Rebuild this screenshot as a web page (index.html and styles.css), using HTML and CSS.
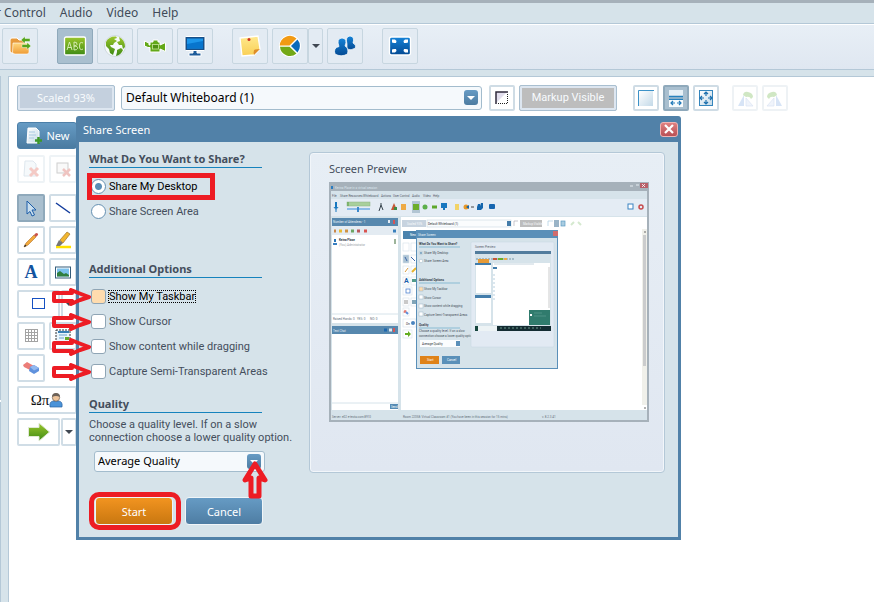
FILE: index.html
```
<!DOCTYPE html>
<html lang="en">
<head>
  <meta charset="UTF-8">
  <title>Share Screen</title>
  <link rel="stylesheet" href="styles.css">
</head>
<body>
  <svg class="defs" width="0" height="0" aria-hidden="true">
    <defs>
      <linearGradient id="green" x1="0" y1="0" x2="0" y2="1"><stop offset="0" stop-color="#9bc62c"/><stop offset="1" stop-color="#3e8a14"/></linearGradient>
      <linearGradient id="blue" x1="0" y1="0" x2="0" y2="1"><stop offset="0" stop-color="#1583d8"/><stop offset="1" stop-color="#044a93"/></linearGradient>
      <linearGradient id="folder" x1="0" y1="0" x2="0" y2="1"><stop offset="0" stop-color="#ffd77e"/><stop offset="1" stop-color="#ee9b35"/></linearGradient>
      <linearGradient id="note" x1="0" y1="0" x2="0" y2="1"><stop offset="0" stop-color="#ffe98e"/><stop offset="1" stop-color="#f9cf55"/></linearGradient>
      <linearGradient id="page" x1="0" y1="0" x2="1" y2="1"><stop offset="0" stop-color="#ffffff"/><stop offset="1" stop-color="#c3d9e8"/></linearGradient>
      <symbol id="arrow" viewBox="0 0 40 20">
        <path d="M3 6 H21 L20 3 L30 7 L38 10 L29 13 L20 17 L21 14 H3 Z" fill="none" stroke="#ed1c24" stroke-width="4" stroke-linejoin="round"/>
      </symbol>
    </defs>
  </svg>

  <nav class="menu">
    <a href="#">r Control</a>
    <a href="#">Audio</a>
    <a href="#">Video</a>
    <a href="#">Help</a>
  </nav>

  <div class="toolbar">
    <div class="group">
      <button class="tool" aria-label="Share files">
        <svg width="24" height="24" viewBox="0 0 24 24"><path d="M2 6 Q2 4 4 4 H9 L11 6 H17 V19 H4 Q2 19 2 17Z" fill="#e79a3c" stroke="#fff"/><path d="M5 9 H21 V18 Q21 20 19 20 H7 Q4.500 20 4.500 18Z" fill="url(#folder)" stroke="#fff" stroke-width=".6"/><path d="M13 6 L17 2.500 V4.500 H22 V7.500 H17 V9.500Z M23 12 L19 8.500 V10.500 H14 V13.500 H19 V15.500Z" fill="#55a51c" stroke="#fff" stroke-width=".4"/></svg>
      </button>
    </div>
    <div class="group">
      <button class="tool active" aria-label="Whiteboard">
        <svg width="24" height="24" viewBox="0 0 24 24"><rect x="1.500" y="3" width="21" height="18" rx="1.500" fill="url(#green)" stroke="#fff" stroke-width="1.300"/><g fill="none" stroke="#dff0bd" stroke-width=".9"><path d="M4 16 L6.500 8 L9 16 M5 13.500 H8.500"/><path d="M11 16 V8 Q14.500 8 14 10.500 Q13.500 12 11 12 Q15 12 14.500 14.500 Q14 16 11 16"/><path d="M20 9 Q16.500 7 16.500 12 Q16.500 17 20 15"/></g></svg>
      </button>
      <button class="tool" aria-label="Web tour">
        <svg width="24" height="24" viewBox="0 0 24 24"><circle cx="12" cy="12" r="10.500" fill="#f6fafa" stroke="#cfd9de"/><path d="M3 8 Q6 2 13 2.500 L14 4 L11 5 L14 7 L11 9 L10 11 L7 11 L8 13 L12 15 L11 18 L10 21 L7 19 L6 15 L3 12Z" fill="url(#green)"/><path d="M16 3 Q22 6 22 13 L20 15 L19 11 L16 11 L14 8 L17 7Z M14 16 L18 14 L20 16 Q18 21 13 22 L14 18Z" fill="url(#green)"/></svg>
      </button>
      <button class="tool" aria-label="Camera">
        <svg width="24" height="24" viewBox="0 0 24 24"><path d="M1.500 7 L6 9 V11 H7 V8 H10 V6 H15 V8 H17 V11 L22.500 8.500 V17.500 L17 15 V18 H7 V13.500 H5 L1.500 12Z" fill="#62a818" stroke="#fff" stroke-width="1" stroke-linejoin="round"/><rect x="9.500" y="10.500" width="6" height="4.500" fill="#4f9012" stroke="#c9e69a" stroke-width=".8"/></svg>
      </button>
      <button class="tool" aria-label="Share screen">
        <svg width="24" height="24" viewBox="0 0 24 24"><path d="M10 16 H14 V19 H18 V22 H6 V19 H10Z" fill="#1c5b9a" stroke="#fff"/><rect x="2" y="2.500" width="20" height="14" rx="1" fill="#174f88" stroke="#fff"/><rect x="4" y="4.500" width="16" height="10" fill="#1d96ea"/><path d="M4 10 L20 7 V14.500 H4Z" fill="#0875cd"/></svg>
      </button>
    </div>
    <div class="group">
      <button class="tool" aria-label="Notes">
        <svg width="24" height="24" viewBox="0 0 24 24"><path d="M2 4 L20 2 L22 15 L16 21 L4 22Z" fill="url(#note)" stroke="#fff" stroke-width="1.300"/><path d="M16 21 Q15 16 17 15.500 L22 15Z" fill="#dd8e2a"/><circle cx="11" cy="5.500" r="1.500" fill="#cf3324"/></svg>
      </button>
      <div class="split">
        <button class="tool" aria-label="Polls">
          <svg width="24" height="24" viewBox="0 0 24 24"><circle cx="12" cy="12" r="11" fill="#fff"/><path d="M11.500 11.500 H1.800 A10 10 0 0 1 18.500 4.500Z" fill="#f29a13"/><path d="M11.500 12.700 H2 A10 10 0 0 0 18.500 19.500Z" fill="#73a817"/><path d="M13 12 L19.500 5.500 A10 10 0 0 1 19.500 18.500Z" fill="#0b6abb"/></svg>
        </button>
        <button class="tool arrow-btn" aria-label="More polls"><span class="caret"></span></button>
      </div>
      <button class="tool" aria-label="Breakout rooms">
        <svg width="24" height="24" viewBox="0 0 24 24"><g fill="url(#blue)" stroke="#fff" stroke-width=".7"><path d="M14 10 Q12 2.500 17 2 Q22 2.500 20 9 Q23.500 11 22.500 14 Q18 17 14 15Z"/><path d="M6 12.500 Q3 4.500 9 4 Q15 4.500 12 12 Q16 14 14.500 20 Q8 23.500 2 20 Q0 14 6 12.500Z"/></g></svg>
      </button>
    </div>
    <div class="group">
      <button class="tool" aria-label="Full screen">
        <svg width="24" height="24" viewBox="0 0 24 24"><rect x="1.500" y="3" width="21" height="18" rx="2" fill="url(#blue)" stroke="#fff" stroke-width="1.300"/><g fill="#fff"><path d="M4 5.500 H7 L8.500 7 L8 9 L6 9 L4 8.500Z"/><path d="M20 5.500 H17 L15.500 7 L16 9 L18 9 L20 8.500Z"/><path d="M4 18.500 H7 L8.500 17 L8 15 L6 15 L4 15.500Z"/><path d="M20 18.500 H17 L15.500 17 L16 15 L18 15 L20 15.500Z"/></g></svg>
      </button>
    </div>
  </div>

  <main class="workspace">
    <aside class="side"></aside>
    <section class="board">
      <div class="board-bar">
        <button class="label-btn scaled">Scaled 93%</button>
        <div class="drop board-drop">
          <select aria-label="Whiteboard"><option>Default Whiteboard (1)</option></select>
          <span class="drop-btn"></span>
        </div>
        <button class="mini" aria-label="Opacity">
          <svg width="14" height="14" viewBox="0 0 14 14"><path d="M1 1 H12 L1 12Z" fill="#e2deed"/><path d="M1 13 V1 H13" fill="none" stroke="#2f2a3b" stroke-width="1.500"/><path d="M12.500 3 V13 M3 12.500 H13" stroke="#222" stroke-dasharray="1 1"/></svg>
        </button>
        <button class="label-btn markup">Markup Visible</button>
        <div class="views">
          <button class="mini" aria-label="Actual size">
            <svg width="18" height="18" viewBox="0 0 18 18"><path d="M2 2 H16 V17 H2Z" fill="url(#page)"/><path d="M1.500 17 V1.500 H17" fill="none" stroke="#3c92c8"/></svg>
          </button>
          <button class="mini active" aria-label="Fit width">
            <svg width="18" height="18" viewBox="0 0 18 18"><rect x="2" y="1" width="14" height="6" fill="#e8f1f7"/><path d="M2 7.500 H16 M2 10.500 H16" stroke="#2781bd" stroke-width="1.500"/><rect x="2" y="11" width="14" height="7" fill="#f7fbfd"/><path d="M4 14 H8 M10 14 H14 M6 12 L4 14 L6 16 M12 12 L14 14 L12 16" fill="none" stroke="#2079b8" stroke-width="1.200"/></svg>
          </button>
          <button class="mini" aria-label="Fit page">
            <svg width="18" height="18" viewBox="0 0 18 18"><rect x="2.500" y="1.500" width="13" height="15" fill="url(#page)" stroke="#3586bd"/><path d="M9 3 V7 M9 11 V15 M3 9 H7 M11 9 H15 M7 5 L9 3 L11 5 M7 13 L9 15 L11 13 M5 7 L3 9 L5 11 M13 7 L15 9 L13 11" fill="none" stroke="#1d70ad" stroke-width="1.200"/></svg>
          </button>
        </div>
        <div class="rotates">
          <button class="mini" disabled aria-label="Rotate left">
            <svg width="18" height="18" viewBox="0 0 18 18"><path d="M8 6 V17 H2Z" fill="#8eb4e8"/><path d="M10 9 V17 H17Z" fill="#d5e1f5" stroke="#8ba9dc" stroke-width=".6"/><path d="M7 6 Q8 2 12 3 Q17 4 17 8 L15 10 Q14 7 10 8Z" fill="#7cbd5a"/></svg>
          </button>
          <button class="mini" disabled aria-label="Rotate right">
            <svg width="18" height="18" viewBox="0 0 18 18"><path d="M10 6 L16 17 H10Z" fill="#8eb4e8"/><path d="M8 9 V17 H1Z" fill="#d5e1f5" stroke="#8ba9dc" stroke-width=".6"/><path d="M11 6 Q10 2 6 3 Q1 4 1 8 L3 10 Q4 7 8 8Z" fill="#7cbd5a"/></svg>
          </button>
        </div>
      </div>

      <div class="palette">
        <button class="new-btn">
          <svg width="18" height="18" viewBox="0 0 18 18"><path d="M3 1 H11 L14 4 V16 H2Z" fill="url(#page)" stroke="#fff"/><path d="M4 5 H10 M4 8 H11 M4 11 H9" stroke="#a8c9e2"/><path d="M13.500 10 V17 M10 13.500 H17" stroke="#3d982a" stroke-width="2.500"/></svg>
          New
        </button>
        <div class="row clear-row">
          <button class="pick" disabled aria-label="Delete page">
            <svg width="18" height="18" viewBox="0 0 18 18"><path d="M3 1 H11 L14 4 V16 H2Z" fill="#e4eef6" stroke="#a4bdd0"/><path d="M8 8 L16 16 M16 8 L8 16" stroke="#e26a5c" stroke-width="3"/></svg>
          </button>
          <button class="pick" disabled aria-label="Clear page">
            <svg width="18" height="18" viewBox="0 0 18 18"><rect x="3" y="3" width="11" height="10" fill="#eee" stroke="#777"/><path d="M9 9 L16 16 M16 9 L9 16" stroke="#d35a50" stroke-width="2.500"/></svg>
          </button>
        </div>
        <div class="row">
          <button class="pick active" aria-label="Select">
            <svg width="18" height="18" viewBox="0 0 18 18"><path d="M5 2 L14 11 H10 L12.500 16 L10 17 L8 12.500 L5 15Z" fill="#c9deee" stroke="#1c5da8"/></svg>
          </button>
          <button class="pick" aria-label="Line">
            <svg width="18" height="18" viewBox="0 0 18 18"><path d="M2 4 L16 14" stroke="#123b9c" stroke-width="1.500"/></svg>
          </button>
        </div>
        <div class="row">
          <button class="pick" aria-label="Pencil">
            <svg width="18" height="18" viewBox="0 0 18 18"><path d="M2 16 L4 12 L12 4 L14 6 L6 14Z" fill="#f2a93b" stroke="#b2702a" stroke-width=".6"/><path d="M12 4 L14 2 Q16.500 2 16 4 L14 6Z" fill="#c9544b"/><path d="M2 16 L3 13.500 L4.500 15Z" fill="#222"/></svg>
          </button>
          <button class="pick" aria-label="Highlighter">
            <svg width="18" height="18" viewBox="0 0 18 18"><path d="M2 16 H17" stroke="#ffe100" stroke-width="2.500"/><path d="M5 9 L9 12 L6 15 H2Z" fill="#777"/><path d="M6 9 L13 1 L16 3 L9 12Z" fill="#f2b62e" stroke="#9d7430" stroke-width=".7"/></svg>
          </button>
        </div>
        <div class="row">
          <button class="pick" aria-label="Text"><span class="letter">A</span></button>
          <button class="pick" aria-label="Image">
            <svg width="18" height="18" viewBox="0 0 18 18"><rect x="1.500" y="4" width="15" height="11" fill="#fff" stroke="#345c7a"/><rect x="3" y="5.500" width="12" height="8" fill="#7cc2ed"/><path d="M3 13.500 V10 L6 8 L10 11 L12 10 L15 12 V13.500Z" fill="#2f7e3e"/></svg>
          </button>
        </div>
        <div class="row joined">
          <button class="pick wide" aria-label="Rectangle">
            <svg width="18" height="18" viewBox="0 0 18 18"><rect x="2.500" y="3.500" width="12" height="10" fill="#fff" stroke="#1651c2"/></svg>
          </button>
          <button class="pick arrow-btn" aria-label="More shapes"><span class="caret"></span></button>
        </div>
        <div class="row">
          <button class="pick" aria-label="Grid">
            <svg width="18" height="18" viewBox="0 0 18 18"><path d="M3 2.500 H16 M3 5.500 H16 M3 8.500 H16 M3 11.500 H16 M3 14.500 H16 M3.500 2 V15 M6.500 2 V15 M9.500 2 V15 M12.500 2 V15 M15.500 2 V15" stroke="#a3a3a3" fill="none"/></svg>
          </button>
          <button class="pick" aria-label="Screenshot">
            <svg width="18" height="18" viewBox="0 0 18 18"><rect x="2" y="3" width="14" height="12" fill="#eaf5fc" stroke="#333" stroke-dasharray="2 1"/><path d="M4 5 H15" stroke="#377fb5" stroke-width="2"/><path d="M5 8 H13 M5 11 H10" stroke="#6aa3cc"/><rect x="11" y="10" width="4" height="3" fill="#64a82c"/></svg>
          </button>
        </div>
        <div class="row">
          <button class="pick" aria-label="Eraser">
            <svg width="18" height="18" viewBox="0 0 18 18"><path d="M1 6 L5 3 L12 7 L8 11 L2 8Z" fill="#ec7d78"/><path d="M8 8 L12 6 L17 9 V12 L12 15 L7 12Z" fill="#5f91dd"/><path d="M8 8 L12 6 L17 9 L12 11.500Z" fill="#93b8ef"/></svg>
          </button>
        </div>
        <div class="row">
          <button class="pick full" aria-label="Symbols and clip art">
            <span class="symbols">Ωπ</span>
            <svg width="14" height="16" viewBox="0 0 14 16"><path d="M1 15 Q0 9 5 9 H9 Q14 9 13 15Z" fill="#4b93d8" stroke="#2a62a0" stroke-width=".7"/><circle cx="7" cy="5.500" r="3.700" fill="#eec49b" stroke="#6d5f52" stroke-width=".7"/><path d="M3 5 Q3 1 7 1 Q11 1 11 5 Q7 3 3 5Z" fill="#6d6259"/></svg>
          </button>
        </div>
        <div class="row joined">
          <button class="pick wide" aria-label="Arrow">
            <svg width="24" height="20" viewBox="0 0 24 20"><path d="M1.500 5.500 H12 V1 L22.500 10 L12 19 V14.500 H1.500Z" fill="url(#green)" stroke="#dfe9d4"/></svg>
          </button>
          <button class="pick arrow-btn" aria-label="More arrows"><span class="caret"></span></button>
        </div>
      </div>
    </section>
  </main>

  <div class="dialog" role="dialog" aria-labelledby="dialog-title">
    <header class="title">
      <span id="dialog-title">Share Screen</span>
      <button class="close" aria-label="Close">
        <svg width="10" height="10" viewBox="0 0 10 10"><path d="M1 1 L9 9 M9 1 L1 9" stroke="#fff" stroke-width="2.200"/></svg>
      </button>
    </header>
    <form class="content">
      <div class="options">
        <section class="share">
          <h2>What Do You Want to Share?</h2>
          <label class="marked"><input type="radio" name="share" checked>Share My Desktop</label>
          <label><input type="radio" name="share">Share Screen Area</label>
        </section>
        <section class="extra">
          <h2>Additional Options</h2>
          <label class="focused"><input type="checkbox"><span>Show My Taskbar</span><svg class="pointer"><use href="#arrow"/></svg></label>
          <label><input type="checkbox"><span>Show Cursor</span><svg class="pointer"><use href="#arrow"/></svg></label>
          <label><input type="checkbox"><span>Show content while dragging</span><svg class="pointer"><use href="#arrow"/></svg></label>
          <label><input type="checkbox"><span>Capture Semi-Transparent Areas</span><svg class="pointer"><use href="#arrow"/></svg></label>
        </section>
        <section class="quality">
          <h2>Quality</h2>
          <p>Choose a quality level. If on a slow<br>connection choose a lower quality option.</p>
          <div class="drop quality-drop">
            <select aria-label="Quality"><option>Average Quality</option></select>
            <span class="drop-btn"></span>
            <svg class="pointer-up" viewBox="0 0 28 40"><path d="M14 4 L24 20 L18 18 V36 H10 V18 L4 20 Z" fill="none" stroke="#ed1c24" stroke-width="5" stroke-linejoin="round"/></svg>
          </div>
        </section>
        <div class="actions">
          <button type="button" class="start">Start</button>
          <button type="button" class="cancel">Cancel</button>
        </div>
      </div>

      <section class="preview">
        <h3>Screen Preview</h3>
        <svg class="shot" viewBox="0 0 320 240" role="img" aria-label="Screen preview">
          <rect width="320" height="240" fill="#a6b1ba"/>
          <rect x="2" y="9" width="316" height="229" fill="#d6e3ea"/>
          <rect x="2" y="17" width="316" height="17" fill="#e4ecf4"/>
          <path d="M3 4 V7" stroke="#2b7cc0" stroke-width="2"/>
          <text x="6" y="7" fill="#dbe5ed">Kerina Place in a virtual session</text>
          <path d="M301 4 H304 M307 3 H310" stroke="#e6edf2"/>
          <rect x="311" y="1" width="8" height="5" fill="#b85f68"/>
          <path d="M313 2 L316 5 M316 2 L313 5" stroke="#fff" stroke-width=".8"/>
          <g fill="#56616c">
            <text x="3" y="15">File</text><text x="11" y="15">Share Resources</text><text x="34" y="15">Whiteboard</text><text x="52" y="15">Actions</text><text x="64" y="15">User Control</text><text x="83" y="15">Audio</text><text x="94" y="15">Video</text><text x="104" y="15">Help</text>
          </g>
          <path d="M7 20 V26" stroke="#1677bf" stroke-width="2"/><path d="M5 25 Q7 29 9 25 M7 27 V30" fill="none" stroke="#1677bf"/>
          <rect x="18" y="20" width="23" height="4" fill="#a8cf9c" stroke="#8bb180" stroke-width=".5"/><path d="M19 20 V24" stroke="#569d42"/>
          <path d="M18 27 H41" stroke="#8cbbe8" stroke-width="2"/>
          <rect x="28" y="25" width="2" height="5" fill="#3b88cb"/>
          <path d="M50 29 L52 23 L54 28 M51 22 H53" stroke="#35424b" fill="none"/>
          <path d="M62 28 L65 21 L68 28Z" fill="#c65736"/><path d="M65 25 H68 V28 H65Z" fill="#3d8b45"/><rect x="72" y="22" width="5" height="6" fill="#eeaa45"/>
          <rect x="83" y="19" width="8" height="12" fill="#b2c5d3"/><rect x="84" y="22" width="6" height="6" fill="#6cad29"/>
          <circle cx="96" cy="25" r="2.500" fill="#5caf4b"/><path d="M103 25 H108" stroke="#5ea82c" stroke-width="3"/>
          <path d="M112 21 H118 V26 H116 V28 H114 V26 H112Z" fill="#1877bf"/><rect x="126" y="22" width="4" height="6" fill="#f2d367"/>
          <circle cx="137" cy="25" r="2.500" fill="#e89827"/><path d="M137 25 L140 23 V27Z" fill="#1563a6"/><path d="M142 25 H145" stroke="#444"/>
          <path d="M148 28 V25 L149 22 H151 V24 L152 21 H154 V26 L152 28Z" fill="#1466ad"/><rect x="160" y="22" width="6" height="5" rx="1" fill="#1766b0"/>
          <rect x="299" y="22" width="5" height="5" fill="#fff" stroke="#3a83c2"/><circle cx="312" cy="25" r="2" fill="none" stroke="#c74b4d" stroke-width="1.500"/>

          <rect x="3" y="36" width="66" height="105" fill="#fff"/>
          <rect x="3" y="36" width="66" height="8" fill="#5788ae"/>
          <rect x="3" y="44" width="66" height="9" fill="#e3ebf2"/>
          <text x="4" y="41" fill="#e8f0f6">Number of Attendees - 1</text>
          <path d="M60 38 V41" stroke="#e4ecf4" stroke-width="2"/><path d="M65 38 V42" stroke="#d45557" stroke-width="2"/>
          <g stroke-width="3"><path d="M5 49 H7" stroke="#c9884a"/><path d="M10 49 H13" stroke="#eabb32"/><path d="M16 49 H19" stroke="#d19445"/><path d="M22 49 H25" stroke="#6ca563"/><path d="M28 49 H31" stroke="#b9575b"/><path d="M35 49 H38" stroke="#d95450"/><path d="M64 49 H67" stroke="#3980bd"/></g>
          <path d="M6 57 V60" stroke="#2875b8" stroke-width="2"/><path d="M4 62 H8" stroke="#397fc0" stroke-width="2"/>
          <text x="10" y="59" class="strong" fill="#26313a">Keina Place</text><text x="10" y="64" fill="#9aa1a7">(You) Administrator</text>
          <path d="M66 57 V62" stroke="#7d9b78" stroke-width="1.500"/>
          <path d="M3 132 H69" stroke="#d6e3ea"/><text x="4" y="138" fill="#65717b">Raised Hands: 0</text><text x="28" y="138" fill="#65717b">YES: 0</text><text x="41" y="138" fill="#65717b">NO: 0</text>
          <rect x="3" y="144" width="66" height="84" fill="#fff"/>
          <rect x="3" y="144" width="66" height="8" fill="#5788ae"/>
          <text x="4" y="150" fill="#e8f0f6">Text Chat</text>
          <path d="M55 148 H58" stroke="#1d66ad" stroke-width="3"/><path d="M60 148 H63" stroke="#dde8f0" stroke-width="3"/><path d="M65 146 V150" stroke="#d45557" stroke-width="2"/>
          <path d="M3 221 H69" stroke="#d6e3ea"/><rect x="61" y="222" width="8" height="5" fill="#568bb4"/><text x="62" y="226" fill="#fff">Send</text>
          <text x="3" y="236" fill="#65717b">Server: e02 e-tecta.com:8910</text>
          <text x="74" y="236" fill="#65717b">Room 22058: Virtual Classroom #1 (You have been in this session for 15 mins)</text>
          <text x="213" y="236" fill="#65717b">v. 8.2.3.41</text>

          <rect x="72" y="35" width="246" height="193" fill="#fff"/>
          <rect x="313" y="47" width="5" height="176" fill="#f0f0ea"/><rect x="314" y="53" width="3" height="131" fill="#cbcccd"/>
          <path d="M315 50 H317 M315 226 H317" stroke="#666"/>
          <rect x="73" y="38" width="24" height="7" fill="#c7d3df"/><text x="78" y="43" fill="#f7fafc">Scaled 93%</text>
          <rect x="98" y="38" width="84" height="7" fill="#fafcfd" stroke="#bfd0dc" stroke-width=".5"/><text x="99" y="43" fill="#2d3338">Default Whiteboard (1)</text>
          <rect x="178" y="39" width="4" height="5" fill="#437ca9"/><path d="M185 44 V39 H189" stroke="#a5a2ac" stroke-width=".6" fill="none"/>
          <rect x="191" y="38" width="22" height="7" fill="#bdbdbd"/><text x="194" y="43" fill="#f7fafc">Markup Visible</text>
          <path d="M219 44 V39 H224" stroke="#a9cce1" stroke-width=".7" fill="none"/><rect x="225" y="38" width="5" height="7" fill="#9ab4c7"/><rect x="232" y="39" width="4" height="5" fill="#a9cce1" stroke="#5d9ac2" stroke-width=".7"/>
          <path d="M242 43 L245 40 M249 40 L252 43" stroke="#d5e9cf" stroke-width="2"/>
          <rect x="74" y="49" width="14" height="8" fill="#4b83ad"/><text x="81" y="54" fill="#fff">New</text>
          <g fill="#fff" stroke="#d5e1e9" stroke-width=".6"><rect x="74" y="61" width="6" height="8"/><rect x="82" y="61" width="6" height="8"/><rect x="74" y="73" width="6" height="8" fill="#acc3d4"/><rect x="82" y="73" width="6" height="8"/><rect x="74" y="84" width="6" height="8"/><rect x="82" y="84" width="6" height="8"/><rect x="74" y="95" width="6" height="8"/><rect x="82" y="95" width="6" height="8"/><rect x="74" y="105" width="9" height="8"/><rect x="74" y="116" width="6" height="8"/><rect x="82" y="116" width="6" height="8"/><rect x="74" y="126" width="6" height="8"/><rect x="74" y="137" width="13" height="8"/><rect x="74" y="148" width="9" height="8"/></g>
          <path d="M76 75 L78 79" stroke="#3e67a8"/><path d="M82 75 L86 79" stroke="#3e67a8"/><path d="M76 90 L79 86" stroke="#d99a3b"/><path d="M83 90 L87 86" stroke="#e7b42d" stroke-width="2"/>
          <text x="75" y="101" class="letter-a" fill="#1b5fac">A</text><rect x="83" y="97" width="4" height="3" fill="#549c8b"/>
          <rect x="77" y="107" width="4" height="4" fill="none" stroke="#4e82cf" stroke-width=".8"/><rect x="75" y="118" width="4" height="4" fill="#c9c9c9"/><rect x="83" y="118" width="4" height="4" fill="#81a5b8"/><path d="M75 129 L77 130" stroke="#e37a73" stroke-width="3"/><path d="M77 130 L79 132" stroke="#5c8edb" stroke-width="2"/>
          <text x="77" y="143" fill="#333">Ωπ</text><circle cx="84" cy="141" r="2" fill="#4b85bf"/><path d="M76 151 H79 V149 L82 152 L79 155 V153 H76Z" fill="#63ad20"/>

          <rect x="87" y="48" width="142" height="139" fill="#5a8fb8"/><rect x="88" y="56" width="140" height="130" fill="#d6e3ea"/>
          <text x="89" y="54" fill="#e8f0f6">Share Screen</text><rect x="224" y="49" width="5" height="5" fill="#d06c6e"/>
          <g class="strong" fill="#36424c"><text x="90" y="63">What Do You Want to Share?</text><text x="90" y="99">Additional Options</text><text x="90" y="144">Quality</text></g>
          <path d="M90 65 H131 M90 101 H131 M90 146 H131" stroke="#67aaca" stroke-width=".7"/>
          <g fill="#46515b"><text x="95" y="72">Share My Desktop</text><text x="95" y="80">Share Screen Area</text><text x="95" y="108">Show My Taskbar</text><text x="95" y="117">Show Cursor</text><text x="95" y="125">Show content while dragging</text><text x="95" y="134">Capture Semi-Transparent Areas</text><text x="90" y="150">Choose a quality level. If on a slow</text><text x="90" y="155">connection choose a lower quality option.</text></g>
          <g fill="#fff" stroke="#9db5c5" stroke-width=".5"><circle cx="92" cy="71" r="1.800"/><circle cx="92" cy="79" r="1.800"/><rect x="90" y="105" width="4" height="4" fill="#ffdcae"/><rect x="90" y="113" width="4" height="4"/><rect x="90" y="122" width="4" height="4"/><rect x="90" y="130" width="4" height="4"/></g>
          <circle cx="92" cy="71" r=".9" fill="#5086ae"/>
          <rect x="91" y="158" width="40" height="7" fill="#fbfdfe"/><text x="93" y="163" fill="#2d3338">Average Quality</text><rect x="127" y="159" width="4" height="5" fill="#5b90b9"/>
          <rect x="91" y="174" width="19" height="8" fill="#df8218"/><text x="98" y="179" fill="#fff">Start</text>
          <rect x="113" y="174" width="18" height="8" fill="#5a90b9"/><text x="118" y="179" fill="#fff">Cancel</text>
          <rect x="142" y="60" width="83" height="105" rx="1" fill="#e2eaf3" stroke="#c5d4e0" stroke-width=".5"/><text x="146" y="66" fill="#56616c">Screen Preview</text>
          <rect x="146" y="69" width="76" height="80" fill="#d6e3ea"/><rect x="146" y="69" width="76" height="3" fill="#527c9d"/>
          <path d="M147 77 H185" stroke="#7495a5" stroke-dasharray="2 1"/><rect x="149" y="77" width="11" height="4" fill="#e69a37"/>
          <path d="M164 77 H168" stroke="#c65736" stroke-width="2"/><path d="M169 77 H174" stroke="#6cad29" stroke-width="2"/><path d="M175 77 H178" stroke="#eeaa45" stroke-width="2"/>
          <rect x="147" y="82" width="15" height="29" fill="#fff"/><rect x="146" y="81" width="16" height="2" fill="#437dab"/><rect x="147" y="114" width="15" height="27" fill="#fff"/><rect x="146" y="113" width="16" height="3" fill="#437dab"/>
          <rect x="164" y="81" width="57" height="62" fill="#fff"/><path d="M165 82 H205" stroke="#c5d4de"/><path d="M164 86 H168" stroke="#437dab" stroke-width="2"/><path d="M165 92 V120" stroke="#b8d0df" stroke-dasharray="2 2"/>
          <path d="M220 85 V126" stroke="#cbcccd"/>
          <rect x="200" y="128" width="21" height="15" fill="#307b6d"/><path d="M201 133 H203" stroke="#fff" stroke-width="2"/><path d="M205 131 H213 M205 134 H217" stroke="#5d9c90" stroke-width=".7"/>
          <rect x="146" y="144" width="76" height="5" fill="#edf3f5"/><rect x="168" y="144" width="54" height="5" fill="#142c32"/><path d="M171 146 H212" stroke="#6b978a" stroke-dasharray="2 2"/><rect x="146" y="144" width="3" height="5" fill="#16453e"/>
        </svg>
      </section>
    </form>
  </div>
</body>
</html>
```
FILE: styles.css
```
*, *::before, *::after {
  box-sizing: border-box;
}
body {
  margin: 0;
  min-height: 100vh;
  display: flex;
  flex-direction: column;
  position: relative;
  border-top: 3px solid #a6b1ba;
  background: #d6e3ea;
  color: #444e5c;
  font-family: "Noto Sans", "Liberation Sans", sans-serif;
  font-size: 11px;
}
button, select, input {
  font: inherit;
  margin: 0;
  padding: 0;
}
svg {
  display: block;
  flex: none;
}
.defs {
  position: absolute;
}
button {
  display: flex;
  align-items: center;
  justify-content: center;
}

/* top bars */
.menu {
  display: flex;
  gap: 14px;
  height: 20px;
  margin-left: -4px;
  line-height: 20px;
  font-size: 12px;
}
.menu a {
  color: #414b59;
  text-decoration: none;
}
.toolbar {
  display: flex;
  gap: 19px;
  height: 47px;
  padding: 4px 2px;
  border-top: 1px solid #b4c8d7;
  border-bottom: 1px solid #b4c8d7;
  box-shadow: inset 0 1px #fff;
  background: linear-gradient(#e8eff6, #dfe7f1);
}
.group {
  display: flex;
  gap: 4px;
}
.split {
  display: flex;
}
.tool {
  width: 36px;
  height: 36px;
  border: 1px solid #c7d6e0;
  border-radius: 2px;
  background: #e3ebf3;
}
.tool.active,
.mini.active,
.pick.active {
  background: #a9bfcf;
  border-color: #8fa9bb;
}
.tool.arrow-btn {
  width: 15px;
}
.caret {
  border: 4px solid transparent;
  border-top-color: #404852;
  border-bottom: 0;
}

/* workspace */
.workspace {
  flex: 1;
  display: flex;
  gap: 7px;
  padding-top: 6px;
}
.side {
  width: 1px;
  background: linear-gradient(#b4c8d7 324px, #fff 324px, #fff 326px, #b4c8d7 326px);
}
.board {
  flex: 1;
  padding: 8px;
  border-top: 1px solid #b4c8d7;
  border-left: 1px solid #b4c8d7;
  background: #fff;
}
.board-bar {
  display: flex;
  align-items: center;
  height: 26px;
}
.label-btn {
  width: 98px;
  height: 26px;
  padding-bottom: 2px;
  border: 1px solid #a9bfd0;
  border-radius: 2px;
  box-shadow: inset 0 0 0 2px #dde6f0;
  background: #c4d0de;
  color: #f8fbfd;
}
.label-btn.markup {
  margin-left: 4px;
  background: #bdbdbd;
  font-family: Roboto, sans-serif;
}
.drop {
  position: relative;
}
.drop select {
  display: block;
  width: 100%;
  padding-bottom: 2px;
  appearance: none;
  border: 1px solid #a3bccd;
  border-radius: 3px;
  background: #f5f9fc;
  color: #000;
}
.drop-btn {
  position: absolute;
  top: 4px;
  right: 4px;
  width: 14px;
  height: 15px;
  border-radius: 3px;
  background: linear-gradient(#679bc4, #4d7ca1);
  pointer-events: none;
}
.drop-btn::after {
  content: "";
  position: absolute;
  top: 6px;
  left: 3px;
  border: 4px solid transparent;
  border-top-color: #fff;
  border-bottom: 0;
}
.board-drop {
  width: 361px;
  margin: 0 7px 0 6px;
}
.board-drop select {
  height: 24px;
  padding-left: 4px;
  font-size: 12px;
}
.mini {
  width: 26px;
  height: 26px;
  border: 2px solid #cfdce5;
  border-radius: 2px;
  background: #fff;
}
.views, .rotates {
  display: flex;
  gap: 4px;
}
.views {
  margin: 0 13px 0 16px;
}
button:disabled {
  opacity: 0.35;
}

/* drawing tools */
.palette {
  display: flex;
  flex-direction: column;
  gap: 4px;
  width: 60px;
  padding-top: 11px;
}
.new-btn {
  gap: 4px;
  height: 27px;
  border: 1px solid #4b7fa8;
  border-radius: 3px;
  background: linear-gradient(#669bc4, #4a7ba1);
  color: #fff;
}
.row {
  display: flex;
  gap: 4px;
}
.clear-row {
  padding: 2px 0 7px;
}
.row.joined {
  gap: 1px;
}
.pick {
  width: 28px;
  height: 28px;
  border: 2px solid #d0dde6;
  border-radius: 2px;
  background: #fff;
}
.pick.wide {
  width: 43px;
}
.pick.arrow-btn {
  width: 16px;
}
.pick.full {
  width: 60px;
}
.letter {
  color: #14549f;
  font: bold 18px "Liberation Serif", serif;
}
.symbols {
  color: #111;
  font: 15px "Liberation Serif", serif;
}

/* share screen dialog */
.dialog {
  position: absolute;
  top: 113px;
  left: 76px;
  width: 605px;
  border: 3px solid #5181a8;
  border-top: 0;
  border-radius: 3px 3px 0 0;
  background: #d6e3ea;
}
.title {
  display: flex;
  align-items: center;
  justify-content: space-between;
  height: 26px;
  padding-left: 4px;
  background: #5181a8;
  color: #fff;
}
.close {
  width: 18px;
  height: 15px;
  border: 1px solid #f0b4b4;
  border-radius: 3px;
  background: linear-gradient(#e08080, #b85055);
}
.content {
  display: flex;
  justify-content: space-between;
  padding: 10px 13px 11px 10px;
}
.options {
  width: 205px;
}
h2 {
  width: 173px;
  height: 16px;
  margin: 0;
  border-bottom: 1px solid #1683bd;
  font-size: 11px;
  line-height: 14px;
  white-space: nowrap;
}
.share {
  height: 110px;
}
.extra {
  height: 135px;
}
.share h2, .extra h2 {
  margin-bottom: 6px;
}
.share label, .extra label {
  position: relative;
  display: flex;
  align-items: center;
  gap: 3px;
  width: max-content;
  height: 25px;
  padding-left: 2px;
  font-family: Roboto, sans-serif;
}
.share input, .extra input {
  appearance: none;
  width: 15px;
  height: 15px;
  border: 1px solid #8fa5b5;
  border-radius: 3px;
  background: #fff;
}
.share input {
  border-color: #6590b1;
  border-radius: 50%;
}
.share input:checked {
  background: radial-gradient(circle, #5b8fb6 0 3px, #fff 4px);
}
.share .marked, .extra .focused {
  color: #000;
}
.marked::before {
  content: "";
  position: absolute;
  top: -1px;
  left: -2px;
  width: 128px;
  height: 27px;
  border: 5px solid #ed1c24;
}
.focused span {
  line-height: 11px;
  outline: 1px dotted #000;
}
.extra .focused input {
  background: #ffdcae;
}
.pointer {
  position: absolute;
  top: 3px;
  left: -38px;
  width: 40px;
  height: 20px;
}
.quality p {
  margin: 5px 0 7px;
  font-family: Roboto, sans-serif;
  line-height: 13px;
  white-space: nowrap;
}
.quality-drop {
  width: 171px;
  margin-left: 5px;
}
.quality-drop select {
  height: 21px;
  padding-left: 3px;
}
.quality-drop .drop-btn {
  top: 3px;
}
.pointer-up {
  position: absolute;
  top: 9px;
  right: -4px;
  width: 28px;
  height: 40px;
}
.actions {
  display: flex;
  gap: 12px;
  padding: 25px 0 1px 6px;
}
.actions button {
  width: 78px;
  height: 28px;
  border: 1px solid #f0f5f8;
  border-radius: 4px;
  color: #fff;
}
.actions .start {
  position: relative;
  background: linear-gradient(#f29420, #c97710);
}
.start::after {
  content: "";
  position: absolute;
  top: -6px;
  left: -7px;
  width: 92px;
  height: 38px;
  border: 5px solid #ed1c24;
  border-radius: 10px;
}
.actions .cancel {
  background: linear-gradient(#669bc4, #4e7da3);
}
.preview {
  align-self: flex-start;
  width: 356px;
  padding: 9px 15px 50px 19px;
  border: 1px solid #b4c8d7;
  border-radius: 4px;
  box-shadow: inset 0 0 0 1px #f2f6fa;
  background: linear-gradient(#e7eef5, #e0e7f1);
}
h3 {
  height: 20px;
  margin: 0;
  font-size: 11px;
  font-weight: normal;
  line-height: 14px;
}
.shot {
  width: 320px;
  height: 240px;
}
.shot text {
  font-family: "Liberation Sans Narrow", Roboto, sans-serif;
  font-size: 3px;
}
.shot .strong {
  font-weight: bold;
}
.shot .letter-a {
  font-size: 7px;
  font-weight: bold;
}
```
